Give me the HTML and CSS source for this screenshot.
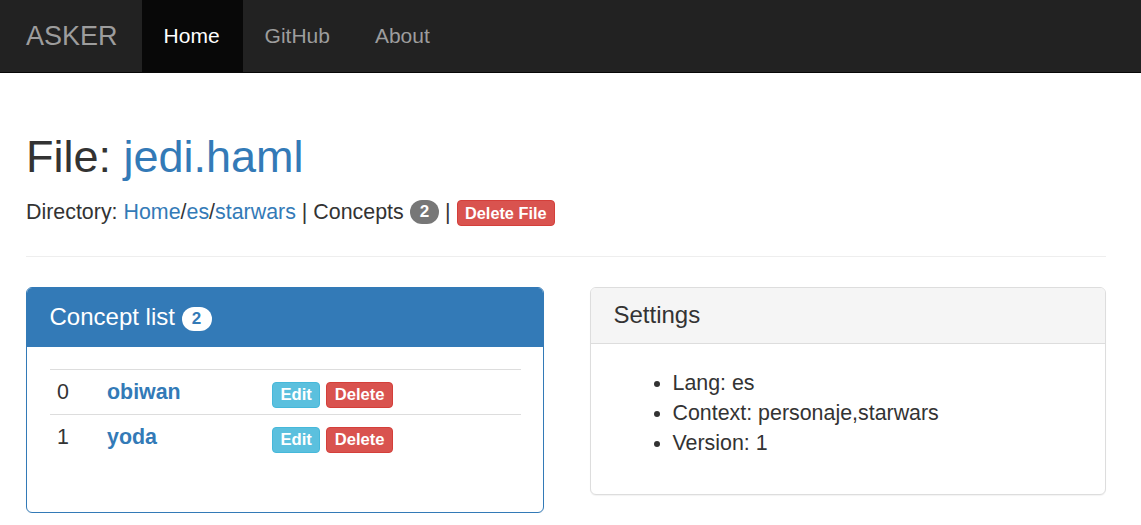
FILE: index.html
```html
<!DOCTYPE html>
<html lang="en">
<head>
<meta charset="utf-8">
<title>ASKER</title>
<link rel="stylesheet" href="styles.css">
</head>
<body>
<nav class="navbar">
  <a class="brand" href="#">ASKER</a>
  <ul class="nav">
    <li class="active"><a href="#">Home</a></li>
    <li><a href="#">GitHub</a></li>
    <li><a href="#">About</a></li>
  </ul>
</nav>
<main class="container">
  <h2 class="title">File: <a href="#">jedi.haml</a></h2>
  <p class="dir">Directory: <a href="#">Home</a>/<a href="#">es</a>/<a href="#">starwars</a> | Concepts <span class="badge">2</span> | <a class="btn btn-danger" href="#">Delete File</a></p>
  <hr class="divider">
  <div class="row">
    <section class="panel panel-primary">
      <div class="panel-heading">
        <h3 class="panel-title">Concept list <span class="badge badge-light">2</span></h3>
      </div>
      <div class="panel-body">
        <table class="table">
          <tbody>
            <tr>
              <td class="c-num">0</td>
              <td class="c-name"><a href="#">obiwan</a></td>
              <td class="c-act"><a class="btn btn-info" href="#">Edit</a> <a class="btn btn-danger" href="#">Delete</a></td>
            </tr>
            <tr>
              <td class="c-num">1</td>
              <td class="c-name"><a href="#">yoda</a></td>
              <td class="c-act"><a class="btn btn-info" href="#">Edit</a> <a class="btn btn-danger" href="#">Delete</a></td>
            </tr>
          </tbody>
        </table>
      </div>
    </section>
    <section class="panel panel-default">
      <div class="panel-heading">
        <h3 class="panel-title">Settings</h3>
      </div>
      <div class="panel-body settings-body">
        <ul class="settings">
          <li>Lang: es</li>
          <li>Context: personaje,starwars</li>
          <li>Version: 1</li>
        </ul>
      </div>
    </section>
  </div>
</main>
</body>
</html>
```

FILE: styles.css
```css
* { box-sizing: border-box; }

html, body { margin: 0; padding: 0; }

body {
  font-family: "Liberation Sans", Arial, sans-serif;
  font-size: 21.4px;
  line-height: 30px;
  color: #333;
  background: #fff;
}

a { color: #337ab7; text-decoration: none; }

/* Navbar */
.navbar {
  display: flex;
  align-items: stretch;
  height: 73px;
  background: #222;
  border-bottom: 1px solid #080808;
}
.brand {
  display: block;
  padding: 0 24px 0 26px;
  font-size: 27px;
  line-height: 72px;
  color: #9d9d9d;
}
.nav {
  display: flex;
  margin: 0;
  padding: 0;
  list-style: none;
}
.nav li a {
  display: block;
  padding: 0 23px 0 22px;
  line-height: 72px;
  font-size: 21px;
  color: #9d9d9d;
}
.nav li.active a {
  background: #080808;
  color: #fff;
}

/* Main */
.container {
  width: 1080px;
  margin-left: 26px;
}
.title {
  margin: 59px 0 0;
  font-size: 45px;
  font-weight: 400;
  line-height: 1.1;
  color: #333;
}
.dir {
  margin: 15px 0 0;
}
.divider {
  margin: 29px 0 0;
  border: 0;
  border-top: 1px solid #eee;
  height: 0;
}

.badge {
  display: inline-block;
  min-width: 29px;
  padding: 3px 10px;
  font-size: 17px;
  font-weight: 700;
  line-height: 18px;
  color: #fff;
  text-align: center;
  vertical-align: 2px;
  background: #777;
  border-radius: 12px;
}
.badge-light {
  background: #fff;
  color: #337ab7;
  min-width: 30px;
  padding: 3px 10px;
}

.btn {
  display: inline-block;
  padding: 0 7.5px;
  font-size: 16.6px;
  font-weight: 700;
  line-height: 24px;
  color: #fff;
  border: 1px solid transparent;
  border-radius: 4px;
  vertical-align: 1px;
}
.dir .btn { font-size: 16.3px; vertical-align: 0; }
.btn-danger { background: #d9534f; border-color: #d43f3a; }
.btn-info { background: #5bc0de; border-color: #46b8da; }

/* Panels */
.row {
  display: grid;
  grid-template-columns: 518px 516px;
  column-gap: 46px;
  align-items: start;
  margin-top: 30px;
}
.panel {
  background: #fff;
  border: 1px solid #ddd;
  border-radius: 6px;
  box-shadow: 0 1px 1px rgba(0,0,0,.05);
  overflow: hidden;
}
.panel-primary { border-color: #337ab7; }
.panel-heading {
  display: flex;
  align-items: center;
  padding: 0 22.5px;
}
.panel-primary .panel-heading {
  height: 59px;
  background: #337ab7;
  color: #fff;
}
.panel-default .panel-heading {
  height: 56px;
  background: #f5f5f5;
  color: #333;
  border-bottom: 1px solid #ddd;
}
.panel-title {
  margin: 0;
  font-size: 24px;
  font-weight: 400;
  line-height: 26px;
  color: inherit;
}
.panel-primary .panel-title .badge { vertical-align: 1px; }
.panel-body {
  padding: 22.5px;
}
.settings-body {
  padding: 24.5px 22.5px 20.5px;
}

/* Table */
.table {
  width: 100%;
  table-layout: fixed;
  border-collapse: collapse;
  margin-bottom: 30px;
}
.table td {
  padding: 7px 7.5px;
  border-top: 1px solid #ddd;
  line-height: 30px;
  vertical-align: middle;
}
.c-num { width: 50px; }
.c-name { width: 165px; }
.c-name a { font-weight: 700; }
.table td.c-act {
  padding: 12px 7.5px 6px;
  line-height: 26px;
  vertical-align: top;
}
.c-act .btn { vertical-align: top; }

/* Settings list */
.settings {
  margin: 0 0 15px;
  padding-left: 59px;
}
```
